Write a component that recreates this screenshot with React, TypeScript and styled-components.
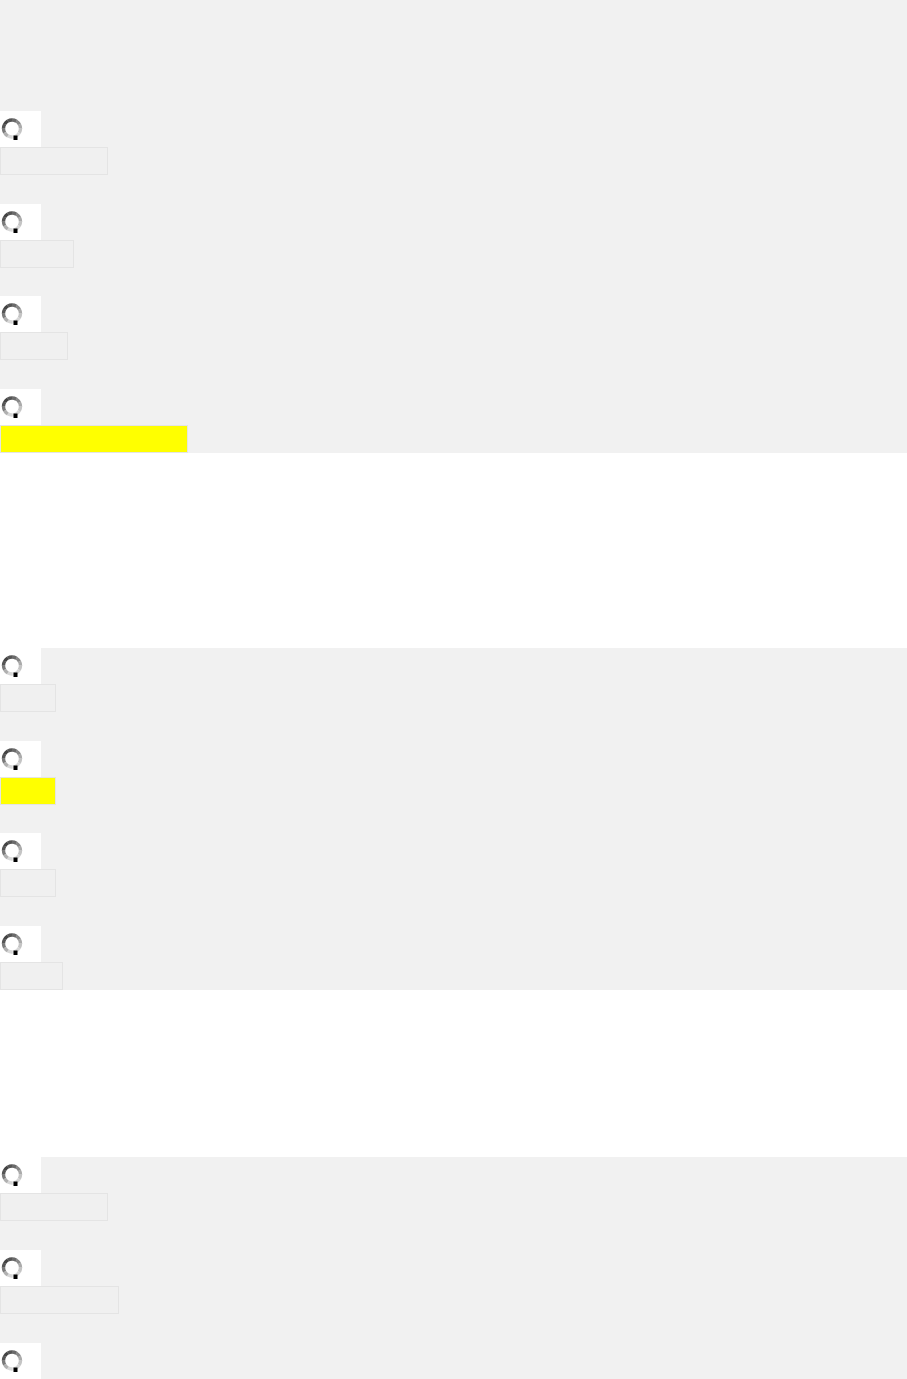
import styled, { createGlobalStyle } from "styled-components";

const GlobalStyle = createGlobalStyle`
  html, body {
    margin: 0;
    padding: 0;
    background: #ffffff;
    font-family: "Liberation Sans", Arial, sans-serif;
  }
`;

const Page = styled.div`
  display: flex;
  flex-direction: column;
  width: 907px;
`;

const Section = styled.section<{ $top: number; $gapBefore: number }>`
  display: flex;
  flex-direction: column;
  gap: 28.7px;
  padding-top: ${(p) => p.$top}px;
  margin-top: ${(p) => p.$gapBefore}px;
  background-color: #f1f1f1;
`;

const Item = styled.div`
  display: flex;
  flex-direction: column;
  align-items: flex-start;
`;

const Tile = styled.div`
  display: flex;
  align-items: center;
  width: 41px;
  height: 36px;
  padding-left: 1px;
  box-sizing: border-box;
  background-color: #ffffff;
`;

const Field = styled.div<{ $width: number; $marked?: boolean }>`
  width: ${(p) => p.$width}px;
  height: 28px;
  box-sizing: border-box;
  border: 1px solid #e4e4e4;
  background-color: ${(p) => (p.$marked ? "#ffff00" : "#f0f0f0")};
`;

function Throbber() {
  const segs = [
    { a: 150, c: "#7a7a7a" },
    { a: 180, c: "#555" },
    { a: 210, c: "#444" },
    { a: 240, c: "#555" },
    { a: 270, c: "#6a6a6a" },
    { a: 300, c: "#888" },
    { a: 330, c: "#aaa" },
    { a: 0, c: "#c4c4c4" },
    { a: 30, c: "#d6d6d6" },
    { a: 60, c: "#e2e2e2" },
    { a: 90, c: "#d8d8d8" },
    { a: 120, c: "#b0b0b0" },
  ];
  const r = 8.5;
  const cx = 11;
  const cy = 11.5;
  const pt = (deg: number) => {
    const rad = (deg * Math.PI) / 180;
    return [cx + r * Math.cos(rad), cy + r * Math.sin(rad)];
  };
  return (
    <svg width="22" height="24" viewBox="0 0 22 24">
      {segs.map((s, i) => {
        const [x1, y1] = pt(s.a);
        const [x2, y2] = pt(s.a + 31);
        return (
          <path
            key={i}
            d={`M${x1} ${y1} A${r} ${r} 0 0 1 ${x2} ${y2}`}
            stroke={s.c}
            strokeWidth="3.4"
            fill="none"
          />
        );
      })}
      <rect x="12.5" y="18.5" width="4" height="4.5" fill="#000" />
    </svg>
  );
}

const sections = [
  { top: 111, gap: 0, widths: [108, 74, 68, 188], marked: 3 },
  { top: 0, gap: 195, widths: [56, 56, 56, 63], marked: 1 },
  { top: 0, gap: 167, widths: [108, 119, 108], marked: -1 },
];

export default function App() {
  return (
    <>
      <GlobalStyle />
      <Page>
        {sections.map((s, si) => (
          <Section key={si} $top={s.top} $gapBefore={s.gap}>
            {s.widths.map((w, i) => (
              <Item key={i}>
                <Tile>
                  <Throbber />
                </Tile>
                <Field $width={w} $marked={i === s.marked} />
              </Item>
            ))}
          </Section>
        ))}
      </Page>
    </>
  );
}
